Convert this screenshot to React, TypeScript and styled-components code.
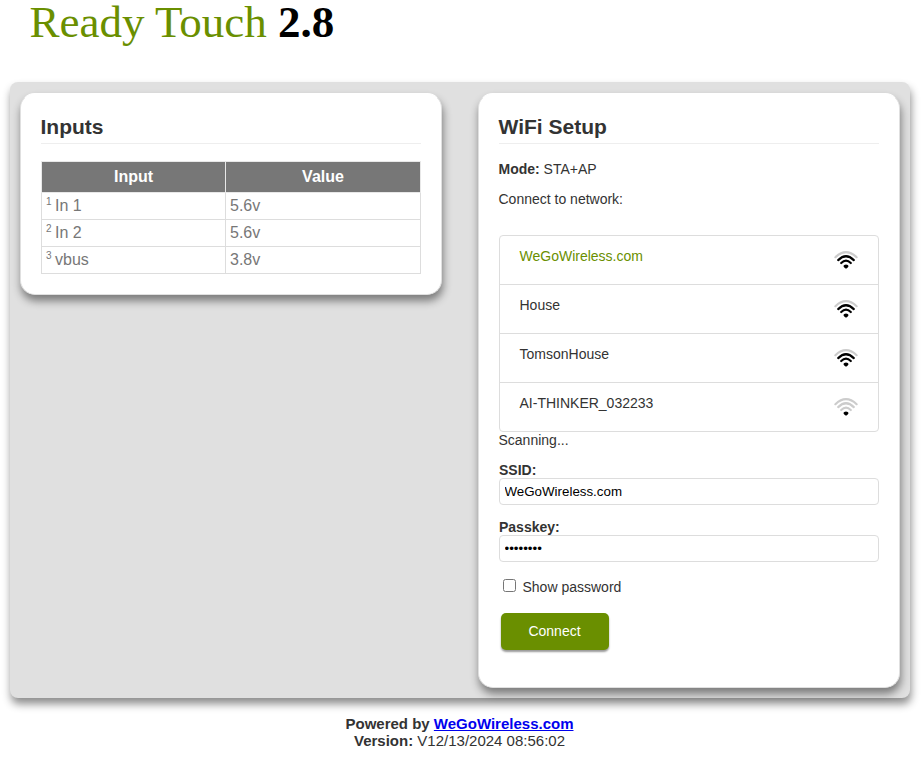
import React, { useState } from 'react';
import styled, { createGlobalStyle } from 'styled-components';

const GlobalStyle = createGlobalStyle`
  * { box-sizing: border-box; }
  body {
    margin: 0;
    background: #fff;
    color: #333;
    font: 14px/17px "Liberation Sans", Arial, sans-serif;
  }
`;

const Page = styled.div`
  display: flex;
  flex-direction: column;
  width: 922px;
  height: 759px;
  padding-left: 10px;
`;

const Title = styled.h1`
  margin: 0;
  height: 82px;
  padding-left: 19.5px;
  font: 400 45px/44px "Liberation Serif", "Times New Roman", serif;
  color: #6a8f00;
  white-space: nowrap;

  b { color: #000; }
`;

const Panel = styled.main`
  display: flex;
  justify-content: space-between;
  align-items: flex-start;
  width: 900px;
  height: 616px;
  padding: 11px 10px 10px;
  border-radius: 8px;
  background: #e0e0e0;
  box-shadow: 1px 6px 9px rgba(0, 0, 0, 0.45);
`;

const Card = styled.section<{ $height: number }>`
  width: 422px;
  height: ${(p) => p.$height}px;
  padding: 19px 20px 0;
  border: 1px solid #e0e0e0;
  border-top-color: #fff;
  border-radius: 15px;
  background: #fff;
  box-shadow: 1px 6px 9px rgba(0, 0, 0, 0.45);
`;

const CardTitle = styled.h2`
  margin: 0 0 17px;
  height: 31px;
  border-bottom: 1px solid #eee;
  font-size: 21px;
  line-height: 28px;
  text-indent: -0.5px;
`;

const Table = styled.table`
  width: 380px;
  table-layout: fixed;
  border-collapse: collapse;
  font-size: 16px;
  line-height: 18px;
  color: #777;
`;

const HeadCell = styled.th<{ $width?: number }>`
  width: ${(p) => (p.$width ? `${p.$width}px` : 'auto')};
  height: 31px;
  padding: 0 0 1px;
  border: 1px solid #e8e8e8;
  background: #777;
  color: #fff;
`;

const Cell = styled.td`
  height: 27px;
  padding: 0 4px;
  border: 1px solid #ddd;

  sup {
    margin-right: -1px;
    font-size: 10px;
    line-height: 0;
    vertical-align: 6px;
  }
`;

const Line = styled.p<{ $gap: number }>`
  margin: 0 0 ${(p) => p.$gap}px;
  text-indent: -0.5px;
`;

const Networks = styled.ul`
  margin: 0;
  padding: 0;
  list-style: none;
  border: 1px solid #ddd;
  border-radius: 4px;
`;

const Network = styled.li<{ $active?: boolean }>`
  display: flex;
  justify-content: space-between;
  height: 49px;
  padding: 12px 20px 0 19.5px;
  color: ${(p) => (p.$active ? '#6a8f00' : '#333')};

  & + & { border-top: 1px solid #ddd; }
  &:first-child { height: 48px; }
`;

const SignalIcon = styled.svg`
  width: 24px;
  height: 20px;
  margin-top: 2px;
  fill: none;
  stroke-width: 2.2;
  stroke-linecap: round;
`;

const Label = styled.label`
  display: block;
  height: 16px;
  font-weight: 700;
`;

const Field = styled.input`
  display: block;
  width: 380px;
  height: 27px;
  margin-bottom: 14px;
  padding: 0 5px 1px 4.5px;
  border: 1px solid #ddd;
  border-radius: 4px;
  background: #fff;
  color: #000;
  font: 13.333px "Liberation Sans", Arial, sans-serif;
  outline: none;
`;

const CheckRow = styled.label`
  display: flex;
  align-items: center;
  gap: 6.5px;
  height: 17px;
  margin-top: 17px;
  padding-left: 4px;

  input { width: 13px; height: 13px; margin: 0 0 4px; }
`;

const ConnectButton = styled.button`
  display: block;
  width: 108px;
  height: 37px;
  margin: 17px 0 0 2px;
  padding: 0 1px 2px 0;
  border: 0;
  border-radius: 5px;
  background: #6a8f00;
  box-shadow: 0 2px 2px rgba(0, 0, 0, 0.4);
  color: #fff;
  font: 14px "Liberation Sans", Arial, sans-serif;
`;

const Footer = styled.footer`
  width: 899px;
  margin-top: 17px;
  font-size: 15px;
  text-align: center;

  a { color: #00e; }
`;

const arcs = [
  'M7.2 13Q12 8.4 16.8 13',
  'M4.2 10.1Q12 2.4 19.8 10.1',
  'M1.4 7.2Q12 -2.8 22.6 7.2',
];

function Signal({ strength }: { strength: number }) {
  return (
    <SignalIcon viewBox="0 0 24 20" aria-hidden="true">
      {arcs.map((d, i) => (
        <path key={d} d={d} stroke={i + 1 < strength ? '#000' : '#ccc'} />
      ))}
      <path d="M9.4 16Q9.8 14.5 12 14.5T14.6 16Q14.2 17.6 12 18.8Q9.8 17.6 9.4 16Z" fill="#000" />
    </SignalIcon>
  );
}

const inputs = [
  { name: 'In 1', value: '5.6v' },
  { name: 'In 2', value: '5.6v' },
  { name: 'vbus', value: '3.8v' },
];

const networks = [
  { name: 'WeGoWireless.com', strength: 3 },
  { name: 'House', strength: 3 },
  { name: 'TomsonHouse', strength: 3 },
  { name: 'AI-THINKER_032233', strength: 1 },
];

export default function App() {
  const [ssid, setSsid] = useState('WeGoWireless.com');
  const [passkey, setPasskey] = useState('password');
  const [visible, setVisible] = useState(false);

  return (
    <>
      <GlobalStyle />
      <Page>
        <Title>Ready Touch <b>2.8</b></Title>
        <Panel>
          <Card $height={202}>
            <CardTitle>Inputs</CardTitle>
            <Table>
              <thead>
                <tr><HeadCell $width={184}>Input</HeadCell><HeadCell>Value</HeadCell></tr>
              </thead>
              <tbody>
                {inputs.map((row, i) => (
                  <tr key={row.name}>
                    <Cell><sup>{i + 1}</sup> {row.name}</Cell>
                    <Cell>{row.value}</Cell>
                  </tr>
                ))}
              </tbody>
            </Table>
          </Card>
          <Card $height={595}>
            <CardTitle>WiFi Setup</CardTitle>
            <Line $gap={13}><b>Mode:</b> STA+AP</Line>
            <Line $gap={27}>Connect to network:</Line>
            <Networks>
              {networks.map((n) => (
                <Network key={n.name} $active={n.name === ssid} onClick={() => setSsid(n.name)}>
                  <span>{n.name}</span>
                  <Signal strength={n.strength} />
                </Network>
              ))}
            </Networks>
            <Line $gap={13}>Scanning...</Line>
            <Label htmlFor="ssid">SSID:</Label>
            <Field id="ssid" value={ssid} onChange={(e) => setSsid(e.target.value)} />
            <Label htmlFor="passkey">Passkey:</Label>
            <Field
              id="passkey"
              type={visible ? 'text' : 'password'}
              value={passkey}
              onChange={(e) => setPasskey(e.target.value)}
            />
            <CheckRow>
              <input type="checkbox" checked={visible} onChange={(e) => setVisible(e.target.checked)} />
              Show password
            </CheckRow>
            <ConnectButton type="button">Connect</ConnectButton>
          </Card>
        </Panel>
        <Footer>
          <b>Powered by <a href="#home">WeGoWireless.com</a></b><br />
          <b>Version:</b> V12/13/2024 08:56:02
        </Footer>
      </Page>
    </>
  );
}
